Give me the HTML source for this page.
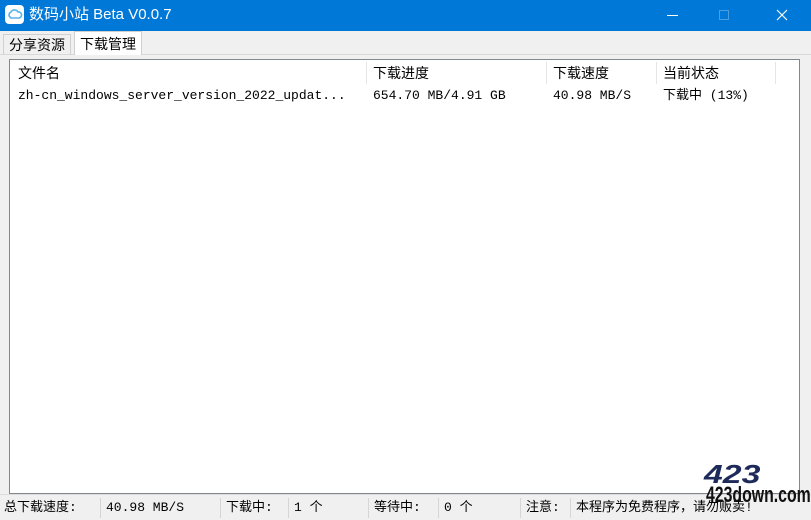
<!DOCTYPE html>
<html><head><meta charset="utf-8"><style>
*{margin:0;padding:0;box-sizing:border-box}
body{width:811px;height:520px;background:#f0f0f0;font-family:"Liberation Sans","Noto Sans CJK SC",sans-serif;position:relative;overflow:hidden;font-size:14px;color:#000;line-height:16px}
.tb{position:absolute;left:0;top:0;width:811px;height:31px;background:#0078d7;color:#fff}
.tb .t{position:absolute;left:29px;top:7px;font-size:15px}
.ic{position:absolute;left:5px;top:5px;width:19px;height:19px;background:#fff;border-radius:4px}
.tab{position:absolute;font-size:14px;padding:3px 5px;border:1px solid #d0d0d0;border-bottom:none}
.list{position:absolute;left:9px;top:59px;width:791px;height:435px;background:#fff;border:1px solid #828790;overflow:hidden}
.h{position:absolute;top:5px;font-size:14px}
.sep{position:absolute;top:2px;width:1px;height:22px;background:#e5e5e5}
.r{position:absolute;top:28px;font-family:"Liberation Mono","Noto Sans CJK SC",monospace;font-size:13px;white-space:nowrap}
.sb{position:absolute;left:0;top:494px;width:811px;height:26px;border-top:1px solid #ddd;font-family:"Liberation Mono","Noto Sans CJK SC",monospace;font-size:13px}
.sb span{position:absolute;top:5px;white-space:nowrap;line-height:16px}
.sb i{position:absolute;top:3px;width:1px;height:20px;background:#d6d6d6}
</style></head><body>
<div class="tb"><div class="ic"><svg width="19" height="19"><path d="M5 12a3 3 0 0 1 1-5 4 4 0 0 1 7 0 3 3 0 0 1 1 6H6z" fill="none" stroke="#5ab4e8" stroke-width="1.6"/></svg></div>
<div class="t">数码小站 Beta V0.0.7</div>
<div style="position:absolute;left:667px;top:15px;width:11px;height:1px;background:#fff"></div>
<div style="position:absolute;left:719px;top:10px;width:10px;height:10px;border:1px solid #4a9ee0"></div>
<svg style="position:absolute;left:776px;top:9px" width="12" height="12"><path d="M1 1L11 11M11 1L1 11" stroke="#fff" stroke-width="1.2"/></svg></div>
<div style="position:absolute;left:0;top:54px;width:811px;height:1px;background:#d9d9d9"></div>
<div class="tab" style="left:3px;top:34px;height:21px;padding-top:2px">分享资源</div>
<div class="tab" style="left:74px;top:31px;height:24px;background:#fff;padding-top:4px">下载管理</div>
<div class="list">
<div class="h" style="left:8px">文件名</div><div class="sep" style="left:356px"></div>
<div class="h" style="left:363px">下载进度</div><div class="sep" style="left:536px"></div>
<div class="h" style="left:543px">下载速度</div><div class="sep" style="left:646px"></div>
<div class="h" style="left:653px">当前状态</div><div class="sep" style="left:765px"></div>
<div class="r" style="left:8px">zh-cn_windows_server_version_2022_updat...</div>
<div class="r" style="left:363px">654.70 MB/4.91 GB</div>
<div class="r" style="left:543px">40.98 MB/S</div>
<div class="r" style="left:653px">下载中 (13%)</div>
</div>
<div style="position:absolute;left:704px;top:461px;font:bold italic 26px/26px 'Liberation Sans',sans-serif;color:#1e2a5a;transform:scaleX(1.3);transform-origin:left">423</div>
<div class="sb">
<span style="left:4px">总下载速度:</span><i style="left:100px"></i>
<span style="left:106px">40.98 MB/S</span><i style="left:220px"></i>
<span style="left:226px">下载中:</span><i style="left:288px"></i>
<span style="left:294px">1 个</span><i style="left:368px"></i>
<span style="left:374px">等待中:</span><i style="left:438px"></i>
<span style="left:444px">0 个</span><i style="left:520px"></i>
<span style="left:526px">注意:</span><i style="left:570px"></i>
<span style="left:576px">本程序为免费程序，请勿贩卖!</span>
</div>
<div style="position:absolute;left:706px;top:484px;font:bold 22px/22px 'Liberation Sans',sans-serif;color:#111;transform:scaleX(0.72);transform-origin:left;white-space:nowrap">423down.com</div>
</body></html>
